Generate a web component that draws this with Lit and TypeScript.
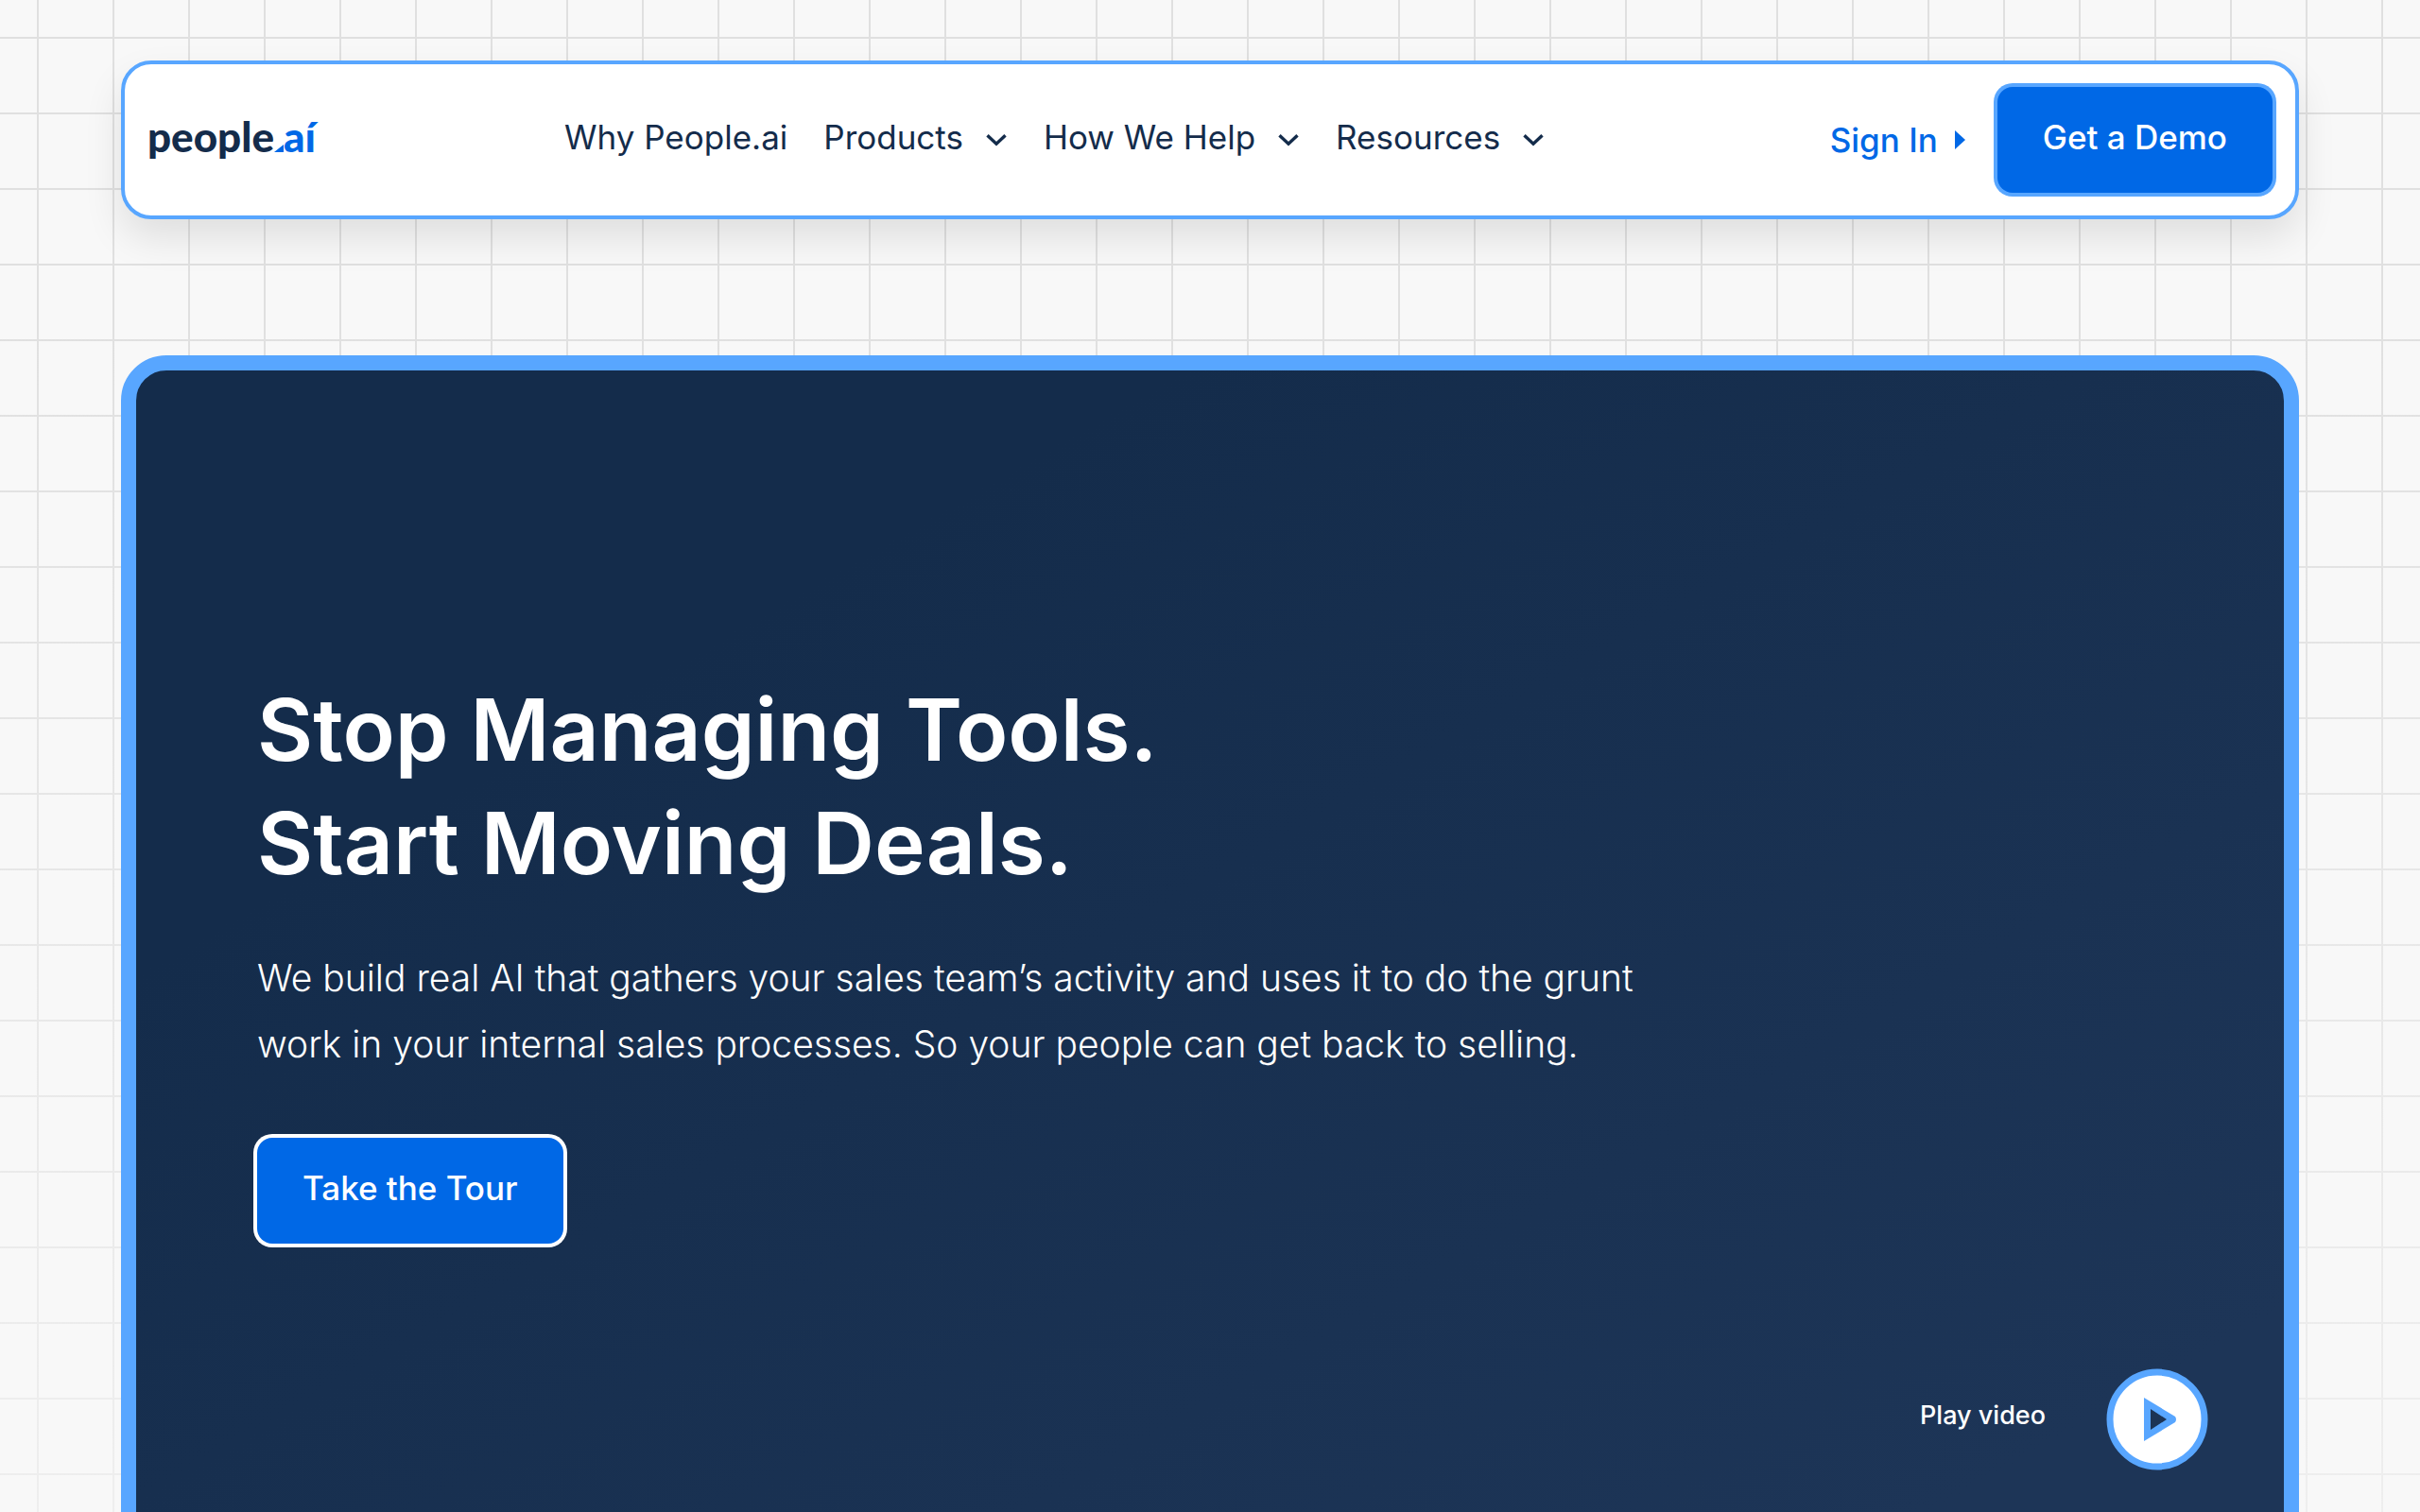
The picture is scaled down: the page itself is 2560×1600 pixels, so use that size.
import { LitElement, html, css } from "lit";
import { customElement, property } from "lit/decorators.js";

@customElement("site-logo")
export class SiteLogo extends LitElement {
  static styles = css`
    :host {
      display: block;
    }
    .logo {
      display: flex;
      align-items: baseline;
      padding-bottom: 8px;
      font: 900 44px/56px Lato, "Liberation Sans", sans-serif;
      color: #142c4b;
      text-decoration: none;
    }
    .accent {
      color: #0068e6;
    }
    .dot {
      width: 10px;
      height: 8px;
      fill: #0068e6;
    }
  `;

  render() {
    return html`<a class="logo" href="/" aria-label="people.ai">
      <span>people</span>
      <svg class="dot" viewBox="0 0 10 8"><path d="M0 8 10 0V8Z" /></svg>
      <span class="accent">aí</span>
    </a>`;
  }
}

@customElement("nav-item")
export class NavItem extends LitElement {
  @property() label = "";
  @property({ type: Boolean }) menu = false;

  static styles = css`
    :host {
      display: block;
    }
    .item {
      display: flex;
      align-items: center;
      gap: 23px;
      padding: 0;
      border: 0;
      background: none;
      font: 400 35px/48px Inter, "Liberation Sans", sans-serif;
      color: #142c4b;
      text-decoration: none;
      white-space: nowrap;
      cursor: pointer;
    }
    .label {
      padding-bottom: 6px;
    }
    .chevron {
      width: 24px;
      height: 24px;
      fill: none;
      stroke: #142c4b;
      stroke-width: 3.4;
    }
  `;

  render() {
    const label = html`<span class="label">${this.label}</span>`;
    return this.menu
      ? html`<button class="item" type="button" aria-haspopup="true">
          ${label}
          <svg class="chevron" viewBox="0 0 24 24" aria-hidden="true">
            <path d="M2.5 7.2 12 16.2 21.500 7.2" />
          </svg>
        </button>`
      : html`<a class="item" href="/why">${label}</a>`;
  }
}

@customElement("app-root")
export class AppRoot extends LitElement {
  static styles = css`
    :host {
      display: block;
      box-sizing: border-box;
      height: 100vh;
      overflow: hidden;
      padding: 64px 128px 0;
      font-family: Inter, "Liberation Sans", sans-serif;
      background:
        linear-gradient(to bottom, rgba(248, 248, 248, 0) 20%, rgba(248, 248, 248, 0.6) 100%),
        repeating-linear-gradient(to right, transparent 0 39px, #e0e0e0 39px 41px, transparent 41px 80px),
        repeating-linear-gradient(to bottom, transparent 0 39px, #e0e0e0 39px 41px, transparent 41px 80px),
        #f8f8f8;
    }
    .header {
      display: flex;
      align-items: center;
      padding: 24px;
      border: 4px solid #58a6ff;
      border-radius: 32px;
      background: #fff;
      box-shadow: 0 20px 40px rgba(0, 0, 0, 0.1);
    }
    .brand {
      flex: 0 0 176px;
    }
    .nav {
      display: flex;
      align-items: center;
      gap: 38px;
      margin-left: 263px;
    }
    .actions {
      display: flex;
      align-items: center;
      gap: 34px;
      margin-left: auto;
    }
    .signin {
      display: flex;
      align-items: center;
      gap: 18px;
      font-size: 35px;
      line-height: 48px;
      font-weight: 500;
      color: #0068e6;
      text-decoration: none;
      white-space: nowrap;
    }
    .caret {
      width: 11px;
      height: 20px;
      fill: #0068e6;
    }
    .cta {
      box-sizing: border-box;
      padding: 29px 48px 35px;
      border-radius: 16px;
      background: #0068e6;
      color: #fff;
      font-size: 35px;
      line-height: 48px;
      font-weight: 500;
      text-decoration: none;
      white-space: nowrap;
      box-shadow: 0 0 0 4px #58a6ff;
    }
    .cta.light {
      box-shadow: 0 0 0 4px #fff;
    }
    .hero {
      display: grid;
      grid-template-columns: 1fr;
      align-content: center;
      position: relative;
      box-sizing: border-box;
      min-height: calc(100vh - 320px);
      margin-top: 144px;
      padding: 80px 128px 84px;
      border: 16px solid #58a6ff;
      border-radius: 48px;
      background: linear-gradient(150deg, #142c4b 25%, #1d3557 90%);
      color: #fff;
    }
    .title {
      margin: 0;
      font-size: 91px;
      line-height: 120px;
      font-weight: 600;
    }
    .lead {
      margin: 48px 0 0;
      max-width: 1520px;
      font-size: 39px;
      line-height: 70px;
      font-weight: 300;
    }
    .tour {
      justify-self: start;
      margin-top: 64px;
    }
    .play {
      position: absolute;
      right: 80px;
      bottom: 84px;
      display: flex;
      align-items: center;
      gap: 64px;
      padding: 0;
      border: 0;
      background: none;
      color: #fff;
      font: 500 27px/40px Inter, "Liberation Sans", sans-serif;
      cursor: pointer;
    }
    .play-label {
      padding-bottom: 8px;
    }
    .disc {
      width: 108px;
      height: 108px;
    }
  `;

  render() {
    return html`
      <header class="header">
        <site-logo class="brand"></site-logo>
        <nav class="nav" aria-label="Main">
          <nav-item label="Why People.ai"></nav-item>
          <nav-item label="Products" menu></nav-item>
          <nav-item label="How We Help" menu></nav-item>
          <nav-item label="Resources" menu></nav-item>
        </nav>
        <div class="actions">
          <a class="signin" href="/signin">
            Sign In
            <svg class="caret" viewBox="0 0 11 20" aria-hidden="true"><path d="M0 0 11 10 0 20Z" /></svg>
          </a>
          <a class="cta" href="/demo">Get a Demo</a>
        </div>
      </header>
      <main class="hero">
        <h1 class="title">Stop Managing Tools.<br />Start Moving Deals.</h1>
        <p class="lead">
          We build real AI that gathers your sales team’s activity and uses it to do the grunt<br />
          work in your internal sales processes. So your people can get back to selling.
        </p>
        <a class="cta light tour" href="/tour">Take the Tour</a>
        <button class="play" type="button">
          <span class="play-label">Play video</span>
          <svg class="disc" viewBox="0 0 108 108" aria-hidden="true">
            <circle cx="54" cy="54" r="50" fill="#fff" stroke="#58a6ff" stroke-width="7" />
            <path d="M40 31V77L73 57Q75 54 73 51Z" fill="#58a6ff" />
            <path d="M47 43V65L64 54Z" fill="#1c3455" />
          </svg>
        </button>
      </main>
    `;
  }
}
